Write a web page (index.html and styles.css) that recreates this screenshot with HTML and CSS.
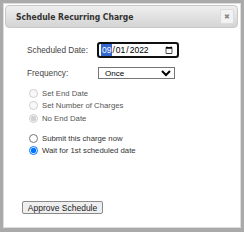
FILE: index.html
```html
<!DOCTYPE html>
<html lang="en">
<head>
  <meta charset="UTF-8" />
  <title>Schedule Recurring Charge</title>
  <link rel="stylesheet" href="styles.css">
</head>
<body>
  <div class="dialog">
    <div class="titlebar">
      <span class="title">Schedule Recurring Charge</span>
      <span class="close">&#x2716;</span>
    </div>

    <div class="content">
      <div class="form-grid">
        <label for="schedDate">Scheduled Date:</label>
        <input type="date" id="schedDate" value="2022-09-01" autofocus>
        <label for="frequency">Frequency:</label>
        <select id="frequency">
          <option>Once</option>
          <option>Weekly</option>
          <option>Monthly</option>
        </select>
      </div>

      <div class="radio-group">
        <label class="disabled"><input type="radio" name="end" disabled> Set End Date</label>
        <label class="disabled"><input type="radio" name="end" disabled> Set Number of Charges</label>
        <label class="disabled"><input type="radio" name="end" disabled checked> No End Date</label>
      </div>

      <div class="radio-group second">
        <label><input type="radio" name="submit"> Submit this charge now</label>
        <label><input type="radio" name="submit" checked> Wait for 1st scheduled date</label>
      </div>

      <button class="approve">Approve Schedule</button>
    </div>
  </div>
</body>
</html>
```

FILE: styles.css
```css
body {
  margin: 0;
  background-color: #aaaaaa;
  font-family: "Liberation Sans", Arial, sans-serif;
  font-size: 7.75px;
  color: #333;
}
.dialog {
  margin: 3px;
  width: 233px;
  height: 221px;
  background-color: #fff;
  border: 1px solid #dddddd;
  padding: 1px 2px 1px 1px;
  display: flex;
  flex-direction: column;
}
.titlebar {
  height: 21px;
  flex: none;
  border: 1px solid #c8c8c8;
  border-radius: 4px;
  background: linear-gradient(#efefef, #d4d4d4);
  display: flex;
  align-items: center;
  justify-content: space-between;
  padding: 0 3px 0 10px;
}
.title {
  font-family: "DejaVu Sans Condensed", "DejaVu Sans", Verdana, sans-serif;
  font-stretch: condensed;
  font-weight: bold;
  font-size: 8.5px;
  color: #333;
}
.close {
  width: 12px;
  height: 13px;
  line-height: 13px;
  text-align: center;
  font-size: 7px;
  color: #888;
  background-color: #f2f2f2;
  border: 1px solid #dcdcdc;
  border-radius: 2px;
}
.content {
  flex: 1;
  padding: 15px 0 0 17px;
  display: flex;
  flex-direction: column;
}
.form-grid {
  display: grid;
  grid-template-columns: 71px auto;
  row-gap: 10px;
  align-items: center;
  margin-left: 5px;
}
.form-grid label {
  font-size: 8.25px;
  color: #444;
}
input[type="date"] {
  box-sizing: border-box;
  width: 80px;
  height: 14px;
  font-family: "Liberation Sans", Arial, sans-serif;
  font-size: 8.5px;
  padding: 0 2px;
  margin: 0;
  border: 1px solid #767676;
}
input[type="date"]:focus {
  outline: 2px solid #101010;
  outline-offset: -1px;
  border-radius: 2px;
}
select {
  box-sizing: border-box;
  width: 77px;
  height: 12px;
  font-family: "Liberation Sans", Arial, sans-serif;
  font-size: 8px;
  padding: 0 2px;
  margin: 0;
  border: 1px solid #767676;
  border-radius: 0;
  background-color: #fff;
}
.radio-group {
  display: flex;
  flex-direction: column;
  margin-top: 8px;
  margin-left: 7px;
}
.radio-group.second {
  margin-top: 7.5px;
}
.radio-group label {
  display: flex;
  align-items: center;
  gap: 4px;
  height: 12.5px;
  color: #333;
}
.radio-group label.disabled {
  color: #555;
}
input[type="radio"] {
  width: 9px;
  height: 9px;
  margin: 0;
}
.approve {
  margin-top: auto;
  margin-bottom: 12px;
  align-self: flex-start;
  font-family: "Liberation Sans", Arial, sans-serif;
  font-size: 8.5px;
  color: #222;
  padding: 0 4px;
  width: 81px;
  height: 13px;
  background-color: #efefef;
  border: 1px solid #8a8a8a;
  border-radius: 2px;
}
```
